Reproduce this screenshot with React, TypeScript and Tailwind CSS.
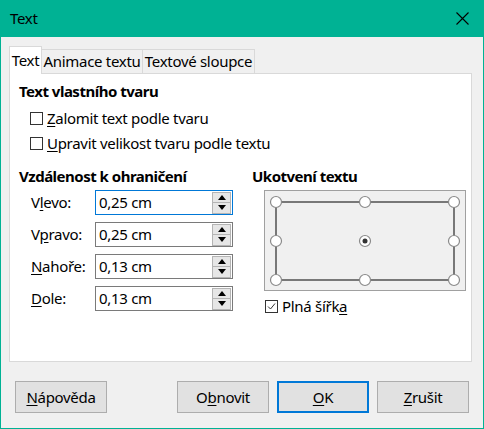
import React from "react";

const font = { fontFamily: '"Noto Sans", "DejaVu Sans", sans-serif' };

const U = ({ children }: { children: React.ReactNode }) => <span className="underline underline-offset-2">{children}</span>;

const Check = ({ checked, children }: { checked?: boolean; children: React.ReactNode }) => (
  <div className="flex items-center h-[25px]">
    <span className="w-[13px] h-[13px] border border-[#333] bg-white flex items-center justify-center mr-[4px]">
      {checked && (
        <svg width="11" height="11" viewBox="0 0 11 11">
          <path d="M2 5.5 L4.5 8 L9 2.5" fill="none" stroke="#333" strokeWidth="1" />
        </svg>
      )}
    </span>
    <span>{children}</span>
  </div>
);

const Spin = ({ label, value, focus }: { label: React.ReactNode; value: string; focus?: boolean }) => (
  <div className="flex items-center h-[25px]">
    <span className="w-[76px] shrink-0 pl-[12px]">{label}</span>
    <div
      className={`w-[138px] h-[25px] shrink-0 bg-white border flex items-center justify-between pl-[3px] pr-[1px] ${
        focus ? "border-[#0078d7]" : "border-[#7a7a7a]"
      }`}
    >
      <span>{value}</span>
      <div className="flex flex-col w-[19px]">
        <span className="h-[11px] bg-[#e6e6e6] border border-[#b4b4b4] flex items-center justify-center">
          <svg width="8" height="5" viewBox="0 0 8 5"><path d="M0 5 L4 0 L8 5 Z" fill="#000" /></svg>
        </span>
        <span className="h-[11px] bg-[#e6e6e6] border border-[#b4b4b4] border-t-0 flex items-center justify-center">
          <svg width="8" height="5" viewBox="0 0 8 5"><path d="M0 0 L4 5 L8 0 Z" fill="#000" /></svg>
        </span>
      </div>
    </div>
  </div>
);

const Btn = ({ children, primary }: { children: React.ReactNode; primary?: boolean }) => (
  <button
    className={`w-[92px] h-[32px] bg-[#e1e1e1] flex items-center justify-center ${
      primary ? "border-2 border-[#0078d7]" : "border border-[#adadad]"
    }`}
  >
    {children}
  </button>
);

const Dot = ({ cx, cy, sel }: { cx: number; cy: number; sel?: boolean }) => (
  <g>
    <circle cx={cx} cy={cy} r="5.5" fill="#fff" stroke="#8a8a8a" strokeWidth="1.2" />
    {sel && <circle cx={cx} cy={cy} r="2.5" fill="#333" />}
  </g>
);

export default function App() {
  return (
    <div
      className="w-[484px] h-[429px] flex flex-col bg-[#00b294] text-[15px] text-black tracking-[-0.3px] whitespace-nowrap"
      style={font}
    >
      <div className="h-[37px] flex items-center justify-between pl-[10px] pr-[15px] shrink-0">
        <span className="text-[15px]">Text</span>
        <svg width="13" height="13" viewBox="0 0 13 13">
          <path d="M0.5 0.5 L12.5 12.5 M12.5 0.5 L0.5 12.5" stroke="#000" strokeWidth="1.1" />
        </svg>
      </div>
      <div className="flex-1 mx-[1px] mb-[1px] bg-[#f0f0f0] flex flex-col pl-[8px] pt-[9px]">
        <div className="flex items-end h-[27px]">
          <div className="h-[28px] w-[33px] bg-white border border-b-0 border-[#d9d9d9] flex items-center justify-center relative z-10 -mb-px">
            Text
          </div>
          <div className="h-[24px] w-[101px] bg-[#f0f0f0] border border-l-0 border-b-0 border-[#d9d9d9] flex items-center justify-center">
            Animace textu
          </div>
          <div className="h-[24px] w-[112px] bg-[#f0f0f0] border border-l-0 border-b-0 border-[#d9d9d9] flex items-center justify-center">
            Textové sloupce
          </div>
        </div>
        <div className="w-[463px] h-[289px] bg-white border border-[#d9d9d9] pl-[9px] pt-[5px]">
          <div className="font-bold tracking-[-0.5px] h-[24px] flex items-center">Text vlastního tvaru</div>
          <div className="pl-[11px] mt-[3px]">
            <Check>
              <U>Z</U>alomit text podle tvaru
            </Check>
            <Check>
              <U>U</U>pravit velikost tvaru podle textu
            </Check>
          </div>
          <div className="flex mt-[8px]">
            <div className="w-[233px] shrink-0">
              <div className="font-bold tracking-[-0.5px] h-[24px] flex items-center">Vzdálenost k ohraničení</div>
              <div className="flex flex-col gap-[7px] mt-[2px]">
                <Spin label={<>V<U>l</U>evo:</>} value="0,25 cm" focus />
                <Spin label={<>V<U>p</U>ravo:</>} value="0,25 cm" />
                <Spin label={<><U>N</U>ahoře:</>} value="0,13 cm" />
                <Spin label={<><U>D</U>ole:</>} value="0,13 cm" />
              </div>
            </div>
            <div className="shrink-0">
              <div className="font-bold tracking-[-0.5px] h-[24px] flex items-center">Ukotvení textu</div>
              <div className="ml-[12px] mt-[2px] w-[202px] h-[101px] bg-[#f0f0f0] border border-[#a0a0a0]">
                <svg width="200" height="99" viewBox="1 1 200 99">
                  <rect x="12" y="12" width="178" height="78" fill="none" stroke="#000" strokeWidth="1" />
                  <Dot cx={12} cy={12} />
                  <Dot cx={101} cy={12} />
                  <Dot cx={190} cy={12} />
                  <Dot cx={12} cy={51} />
                  <Dot cx={101} cy={51} sel />
                  <Dot cx={190} cy={51} />
                  <Dot cx={12} cy={90} />
                  <Dot cx={101} cy={90} />
                  <Dot cx={190} cy={90} />
                </svg>
              </div>
              <div className="ml-[13px] mt-[3px]">
                <Check checked>
                  Plná šířk<U>a</U>
                </Check>
              </div>
            </div>
          </div>
        </div>
        <div className="flex items-center mt-[19px] pl-[6px]">
          <Btn>
            <U>N</U>ápověda
          </Btn>
          <div className="ml-[70px] flex gap-[8px]">
            <Btn>
              O<U>b</U>novit
            </Btn>
            <Btn primary>
              <U>O</U>K
            </Btn>
            <Btn>
              <U>Z</U>rušit
            </Btn>
          </div>
        </div>
      </div>
    </div>
  );
}
